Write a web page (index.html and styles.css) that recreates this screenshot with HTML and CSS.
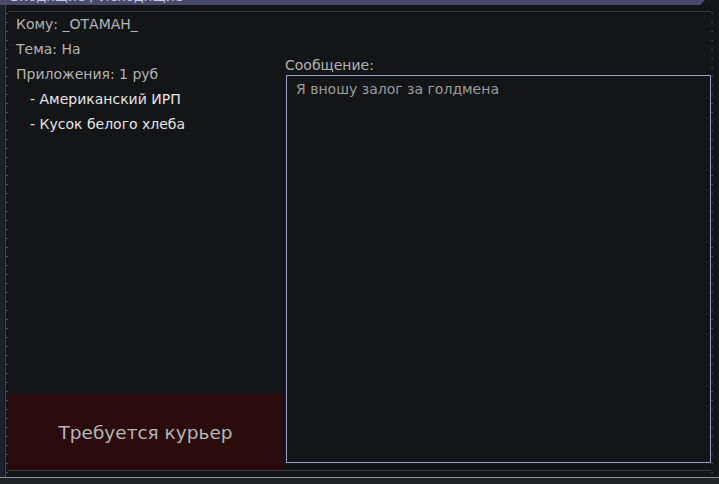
FILE: index.html
```html
<!DOCTYPE html>
<html lang="ru">
<head>
  <meta charset="UTF-8">
  <title>Почта</title>
  <link rel="stylesheet" href="styles.css">
</head>
<body>
  <div class="window">
    <div class="tabbar">
      <div class="tab"><span class="tab-title">Входящие / Исходящие</span></div>
    </div>
    <div class="frame">
      <div class="ruler"></div>
      <div class="panel">
        <div class="columns">
          <div class="left-col">
            <div class="field">Кому: _ОТАМАН_</div>
            <div class="field">Тема: На</div>
            <div class="field">Приложения: 1 руб</div>
            <ul class="attachments">
              <li>- Американский ИРП</li>
              <li>- Кусок белого хлеба</li>
            </ul>
            <button class="courier">Требуется курьер</button>
          </div>
          <div class="right-col">
            <div class="msg-label">Сообщение:</div>
            <div class="msg-box">Я вношу залог за голдмена</div>
          </div>
        </div>
      </div>
      <div class="ruler ruler-right"></div>
    </div>
    <div class="footer"></div>
  </div>
</body>
</html>
```
FILE: styles.css
```css
html, body {
  margin: 0;
  padding: 0;
  height: 100%;
  background: #141517;
  overflow: hidden;
}
.window {
  display: flex;
  flex-direction: column;
  height: 484px;
  font-family: "DejaVu Sans", Verdana, sans-serif;
  font-size: 14px;
  color: #b4b4b4;
  background: #141517;
}

/* top tab strip, mostly scrolled off screen */
.tabbar {
  height: 5px;
  flex: none;
  overflow: hidden;
  display: flex;
}
.tab {
  width: 705px;
  background: #4a4a6c;
  clip-path: polygon(0 0, 100% 0, calc(100% - 5px) 100%, 0 100%);
}
.tab-title {
  display: block;
  margin-top: -11px;
  padding-left: 10px;
  font-size: 14px;
  line-height: 14px;
  color: #c8c8d8;
}

.frame {
  flex: 1;
  display: flex;
}
.ruler {
  width: 8px;
  background:
    repeating-linear-gradient(to bottom, transparent 0 8px, #4c4c4c 8px 9px) 5px 0 / 3px 100% no-repeat,
    linear-gradient(#4c4c4c, #4c4c4c) 5px 0 / 1px 100% no-repeat,
    linear-gradient(#1d2230, #1d2230) 0 0 / 4px 100% no-repeat;
}
.ruler-right {
  background:
    repeating-linear-gradient(to bottom, transparent 0 8px, #3c3c44 8px 9px) 0 0 / 2px 100% no-repeat;
}
.panel {
  flex: 1;
  display: flex;
  flex-direction: column;
  padding-top: 6px;
}
.columns {
  flex: 1;
  display: flex;
  border-top: 1px solid #37383b;
  border-bottom: 1px solid #37383b;
  margin-bottom: 6px;
}
.left-col {
  width: 275px;
  display: flex;
  flex-direction: column;
}
.field {
  padding-left: 8px;
  height: 25px;
  line-height: 25px;
}
.attachments {
  list-style: none;
  margin: 0;
  padding: 0 0 0 22px;
  color: #e6e6e6;
}
.attachments li {
  height: 25px;
  line-height: 25px;
}
.courier {
  margin-top: auto;
  height: 76px;
  border: none;
  background: #2a0c0e;
  color: #b6b6b6;
  font-family: inherit;
  font-size: 18.5px;
  cursor: pointer;
}
.right-col {
  flex: 1;
  display: flex;
  flex-direction: column;
  padding: 43px 0 7px 3px;
}
.msg-label {
  height: 20px;
  line-height: 20px;
  margin-left: -1px;
}
.msg-box {
  flex: 1;
  border: 1px solid #9a9ec4;
  padding: 5px 9px;
  color: #9c9c9c;
}
.footer {
  flex: none;
  box-sizing: border-box;
  height: 7px;
  border-top: 1px solid #8e92a6;
  background: #202124;
}
```
